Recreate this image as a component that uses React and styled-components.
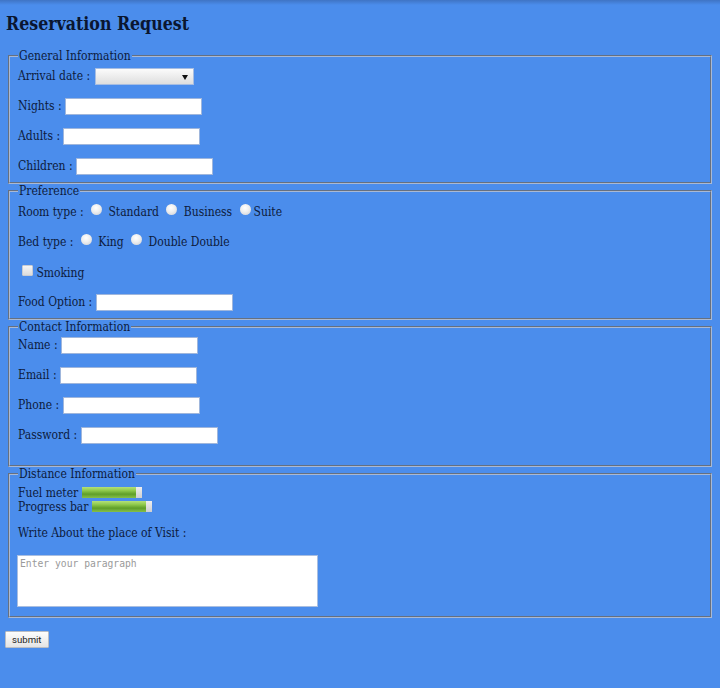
import styled, { createGlobalStyle } from "styled-components";

// Page-wide defaults
const GlobalStyle = createGlobalStyle`
  html {
    background: #4b8dec;
  }
  body {
    margin: 0;
    padding: 0 6px;
    min-height: 688px;
    background: linear-gradient(#3f74c4 0, #4b8dec 5px) no-repeat;
    color: #0d1b3c;
    font-family: "DejaVu Serif Condensed", "DejaVu Serif", serif;
    font-stretch: condensed;
    font-size: 12px;
  }
`;

const Heading = styled.h2`
  margin: 13px 0 14px;
  font-size: 17.6px;
  line-height: 22px;
  font-weight: bold;
  color: #0a1630;
`;

const Fieldset = styled.fieldset`
  margin: 0 2px;
  padding: 0 8px ${(p) => p.$bottom || 8}px;
  border: 2px groove #a9b9d4;
`;

const Legend = styled.legend`
  padding: 0 1px;
  line-height: 14px;
`;

const Rows = styled.div`
  display: flex;
  flex-direction: column;
  gap: ${(p) => (p.$gap === undefined ? 14 : p.$gap)}px;
  padding-top: ${(p) => p.$top || 5}px;
`;

const Row = styled.div`
  height: 16px;
  margin-top: ${(p) => p.$shift || 0}px;
  line-height: 16px;
  white-space: nowrap;
`;

const TextInput = styled.input`
  box-sizing: border-box;
  width: 137px;
  height: 17px;
  margin: 0;
  padding: 0 2px;
  border: 1px solid #9fb6dc;
  background: #fff;
  vertical-align: middle;
`;

const SelectBox = styled.span`
  display: inline-block;
  position: relative;
  box-sizing: border-box;
  width: 99px;
  height: 17px;
  margin-left: 1px;
  border: 1px solid #a6bde2;
  background: linear-gradient(#fbfbfb, #dedede);
  vertical-align: middle;

  &::after {
    content: "";
    position: absolute;
    right: 5px;
    top: 6px;
    border-left: 3px solid transparent;
    border-right: 3px solid transparent;
    border-top: 5px solid #111;
  }
`;

const Radio = styled.input.attrs({ type: "radio" })`
  appearance: none;
  width: 11px;
  height: 11px;
  margin: 0 3px 0 4px;
  border-radius: 50%;
  background: radial-gradient(circle at 45% 35%, #ffffff 0, #eeeeee 45%, #c8ccd4 100%);
  vertical-align: 1px;
`;

const Checkbox = styled.input.attrs({ type: "checkbox" })`
  appearance: none;
  box-sizing: border-box;
  width: 11px;
  height: 11px;
  margin: 0 0 0 4px;
  border: 1px solid #c9ccd2;
  border-radius: 1px;
  background: linear-gradient(#f6f6f6, #dcdcdc);
  vertical-align: 1px;
`;

const Bar = styled.span`
  display: inline-block;
  position: relative;
  width: 60px;
  height: 11px;
  background: linear-gradient(#eeeeee, #cfcfcf);
  vertical-align: -1px;
  overflow: hidden;

  &::before {
    content: "";
    position: absolute;
    left: 0;
    top: 0;
    bottom: 0;
    width: ${(p) => p.$value * 100}%;
    background: linear-gradient(#b4e07a 0, #92cc4e 30%, #5f9e28 65%, #86c04a 100%);
  }
`;

const Line = styled.div`
  line-height: 14px;
  white-space: nowrap;
`;

const TextArea = styled.textarea`
  display: block;
  box-sizing: border-box;
  width: 301px;
  height: 52px;
  margin: 0 0 0 -1px;
  padding: 2px 2px;
  border: 1px solid #a9bee0;
  resize: none;
  font-family: "DejaVu Sans Mono", monospace;
  font-size: 9.7px;

  &::placeholder {
    color: #9a9a9a;
  }
`;

const Submit = styled.button`
  margin: 13px 0 0 -1px;
  height: 17px;
  padding: 0 6px;
  border: 1px solid #b9bdc4;
  border-radius: 1px;
  background: linear-gradient(#fdfdfd, #e4e4e4);
  color: #222;
  font-family: Roboto, "Liberation Sans", sans-serif;
  font-size: 9.6px;
`;

export default function App() {
  return (
    <>
      <GlobalStyle />
      <Heading>Reservation Request</Heading>
      <form onSubmit={(e) => e.preventDefault()}>
        <Fieldset>
          <Legend>General Information</Legend>
          <Rows>
            <Row>
              Arrival date : <SelectBox />
            </Row>
            <Row>
              Nights : <TextInput />
            </Row>
            <Row>
              Adults : <TextInput />
            </Row>
            <Row>
              Children : <TextInput />
            </Row>
          </Rows>
        </Fieldset>

        <Fieldset>
          <Legend>Preference</Legend>
          <Rows $top={6}>
            <Row>
              Room type : <Radio name="room" /> Standard <Radio name="room" /> Business <Radio name="room" />
              Suite
            </Row>
            <Row>
              Bed type : <Radio name="bed" /> King <Radio name="bed" /> Double Double
            </Row>
            <Row $shift={1}>
              <Checkbox /> Smoking
            </Row>
            <Row $shift={-1}>
              Food Option : <TextInput />
            </Row>
          </Rows>
        </Fieldset>

        <Fieldset $bottom={22}>
          <Legend>Contact Information</Legend>
          <Rows $top={3}>
            <Row>
              Name : <TextInput />
            </Row>
            <Row>
              Email : <TextInput />
            </Row>
            <Row>
              Phone : <TextInput />
            </Row>
            <Row>
              Password : <TextInput />
            </Row>
          </Rows>
        </Fieldset>

        <Fieldset $bottom={9}>
          <Legend>Distance Information</Legend>
          <Rows $gap={0} $top={5}>
            <Line>
              Fuel meter <Bar $value={0.9} />
            </Line>
            <Line>
              Progress bar <Bar $value={0.9} />
            </Line>
          </Rows>
          <Rows $gap={14} $top={11}>
            <Row>Write About the place of Visit :</Row>
            <TextArea placeholder="Enter your paragraph" />
          </Rows>
        </Fieldset>

        <Submit type="submit">submit</Submit>
      </form>
    </>
  );
}
